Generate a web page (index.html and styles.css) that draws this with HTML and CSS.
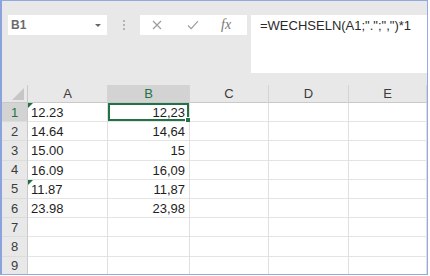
FILE: index.html
```html
<!DOCTYPE html>
<html lang="de">
<head>
    <meta charset="UTF-8">
    <title>WECHSELN</title>
    <link rel="stylesheet" href="styles.css">
</head>
<body>
    <div class="window">
        <div class="formula-bar">
            <div class="name-box">
                <span>B1</span>
                <span class="caret"></span>
            </div>
            <div class="grip"><i></i><i></i><i></i></div>
            <div class="fx-box">
                <svg class="icon" width="10" height="10" viewBox="0 0 10 10">
                    <path d="M1 1 L9 9 M9 1 L1 9" stroke="#9a9a9a" stroke-width="1.1" fill="none"/>
                </svg>
                <svg class="icon" width="12" height="10" viewBox="0 0 12 10">
                    <path d="M1 5.5 L4.2 8.6 L11 1.2" stroke="#9a9a9a" stroke-width="1.1" fill="none"/>
                </svg>
                <span class="fx">fx</span>
            </div>
            <div class="formula">=WECHSELN(A1;".";",")*1</div>
        </div>

        <div class="sheet">
            <div class="corner"><span></span></div>
            <div class="col-head">A</div>
            <div class="col-head active">B</div>
            <div class="col-head">C</div>
            <div class="col-head">D</div>
            <div class="col-head">E</div>

            <div class="row-head active">1</div>
            <div class="cell text flag">12.23</div>
            <div class="cell num selected">12,23<span class="handle"></span></div>
            <div class="cell"></div><div class="cell"></div><div class="cell"></div>

            <div class="row-head">2</div>
            <div class="cell text">14.64</div>
            <div class="cell num">14,64</div>
            <div class="cell"></div><div class="cell"></div><div class="cell"></div>

            <div class="row-head">3</div>
            <div class="cell text">15.00</div>
            <div class="cell num">15</div>
            <div class="cell"></div><div class="cell"></div><div class="cell"></div>

            <div class="row-head">4</div>
            <div class="cell text">16.09</div>
            <div class="cell num">16,09</div>
            <div class="cell"></div><div class="cell"></div><div class="cell"></div>

            <div class="row-head">5</div>
            <div class="cell text flag">11.87</div>
            <div class="cell num">11,87</div>
            <div class="cell"></div><div class="cell"></div><div class="cell"></div>

            <div class="row-head">6</div>
            <div class="cell text">23.98</div>
            <div class="cell num">23,98</div>
            <div class="cell"></div><div class="cell"></div><div class="cell"></div>

            <div class="row-head">7</div>
            <div class="cell"></div><div class="cell"></div><div class="cell"></div><div class="cell"></div><div class="cell"></div>

            <div class="row-head">8</div>
            <div class="cell"></div><div class="cell"></div><div class="cell"></div><div class="cell"></div><div class="cell"></div>

            <div class="row-head">9</div>
            <div class="cell"></div><div class="cell"></div><div class="cell"></div><div class="cell"></div><div class="cell"></div>
        </div>
    </div>
</body>
</html>
```

FILE: styles.css
```css
body {
    margin: 0;
    background: #fff;
    font-family: 'Liberation Sans', Arial, sans-serif;
}
.window {
    width: 425px;
    height: 273px;
    border: 1px solid #93aae0;
    border-left: 2px solid #8aa3dd;
    background: #e8e8e8;
    overflow: hidden;
}
.formula-bar {
    display: flex;
    align-items: flex-start;
    height: 84px;
    padding-top: 14px;
    box-sizing: border-box;
}
.name-box {
    width: 99px;
    height: 20px;
    margin-left: 6px;
    background: #fff;
    display: flex;
    align-items: center;
    justify-content: space-between;
    padding: 0 6px 0 3px;
    box-sizing: border-box;
    font-size: 12px;
    font-weight: bold;
    color: #6a6a6a;
}
.caret {
    width: 0;
    height: 0;
    border-left: 3px solid transparent;
    border-right: 3px solid transparent;
    border-top: 3px solid #666;
}
.grip {
    width: 33px;
    height: 20px;
    display: flex;
    flex-direction: column;
    align-items: center;
    justify-content: center;
    gap: 2px;
}
.grip i {
    width: 2px;
    height: 2px;
    background: #b4b4b4;
}
.fx-box {
    width: 107px;
    height: 20px;
    background: #fff;
    display: flex;
    align-items: center;
    padding-left: 12px;
    box-sizing: border-box;
}
.fx-box .icon:first-child {
    margin-right: 25px;
}
.fx {
    margin-left: 22px;
    font-family: 'Liberation Serif', serif;
    font-style: italic;
    font-size: 14px;
    color: #777;
}
.formula {
    flex: 1;
    height: 58px;
    margin-left: 4px;
    background: #fff;
    padding: 3px 0 0 9px;
    box-sizing: border-box;
    font-size: 13px;
    color: #2a2a2a;
}
.sheet {
    display: grid;
    grid-template-columns: 26px 80px 82px 79px 80px 78px;
    grid-template-rows: 18px repeat(9, 19.2px);
    background: #fff;
    font-size: 13px;
    color: #1e1e1e;
}
.corner {
    background: #e8e8e8;
    border-right: 1px solid #c9c9c9;
    border-bottom: 1px solid #c9c9c9;
    display: flex;
    align-items: flex-end;
    justify-content: flex-end;
    padding: 0 3px 2px 0;
}
.corner span {
    width: 0;
    height: 0;
    border-left: 12px solid transparent;
    border-bottom: 12px solid #c6c6c6;
}
.col-head {
    background: #e8e8e8;
    border-right: 1px solid #d4d4d4;
    border-bottom: 1px solid #c9c9c9;
    display: flex;
    align-items: center;
    justify-content: center;
    color: #3c3c3c;
}
.row-head {
    background: #e8e8e8;
    border-right: 1px solid #c9c9c9;
    border-bottom: 1px solid #dcdcdc;
    display: flex;
    align-items: center;
    justify-content: center;
    color: #3c3c3c;
}
.col-head.active,
.row-head.active {
    background: #d3d3d3;
    color: #217346;
}
.cell {
    border-right: 1px solid #e0e0e0;
    border-bottom: 1px solid #e4e4e4;
    display: flex;
    align-items: center;
    padding: 1px 4px 0 3px;
    position: relative;
}
.num {
    justify-content: flex-end;
}
.flag::before {
    content: "";
    position: absolute;
    top: 0;
    left: 0;
    border-top: 5px solid #1e7145;
    border-right: 5px solid transparent;
}
.selected {
    box-shadow: inset 0 0 0 2px #217346;
}
.handle {
    position: absolute;
    right: -2px;
    bottom: -2px;
    width: 4px;
    height: 4px;
    background: #217346;
    border: 1px solid #fff;
}
```
